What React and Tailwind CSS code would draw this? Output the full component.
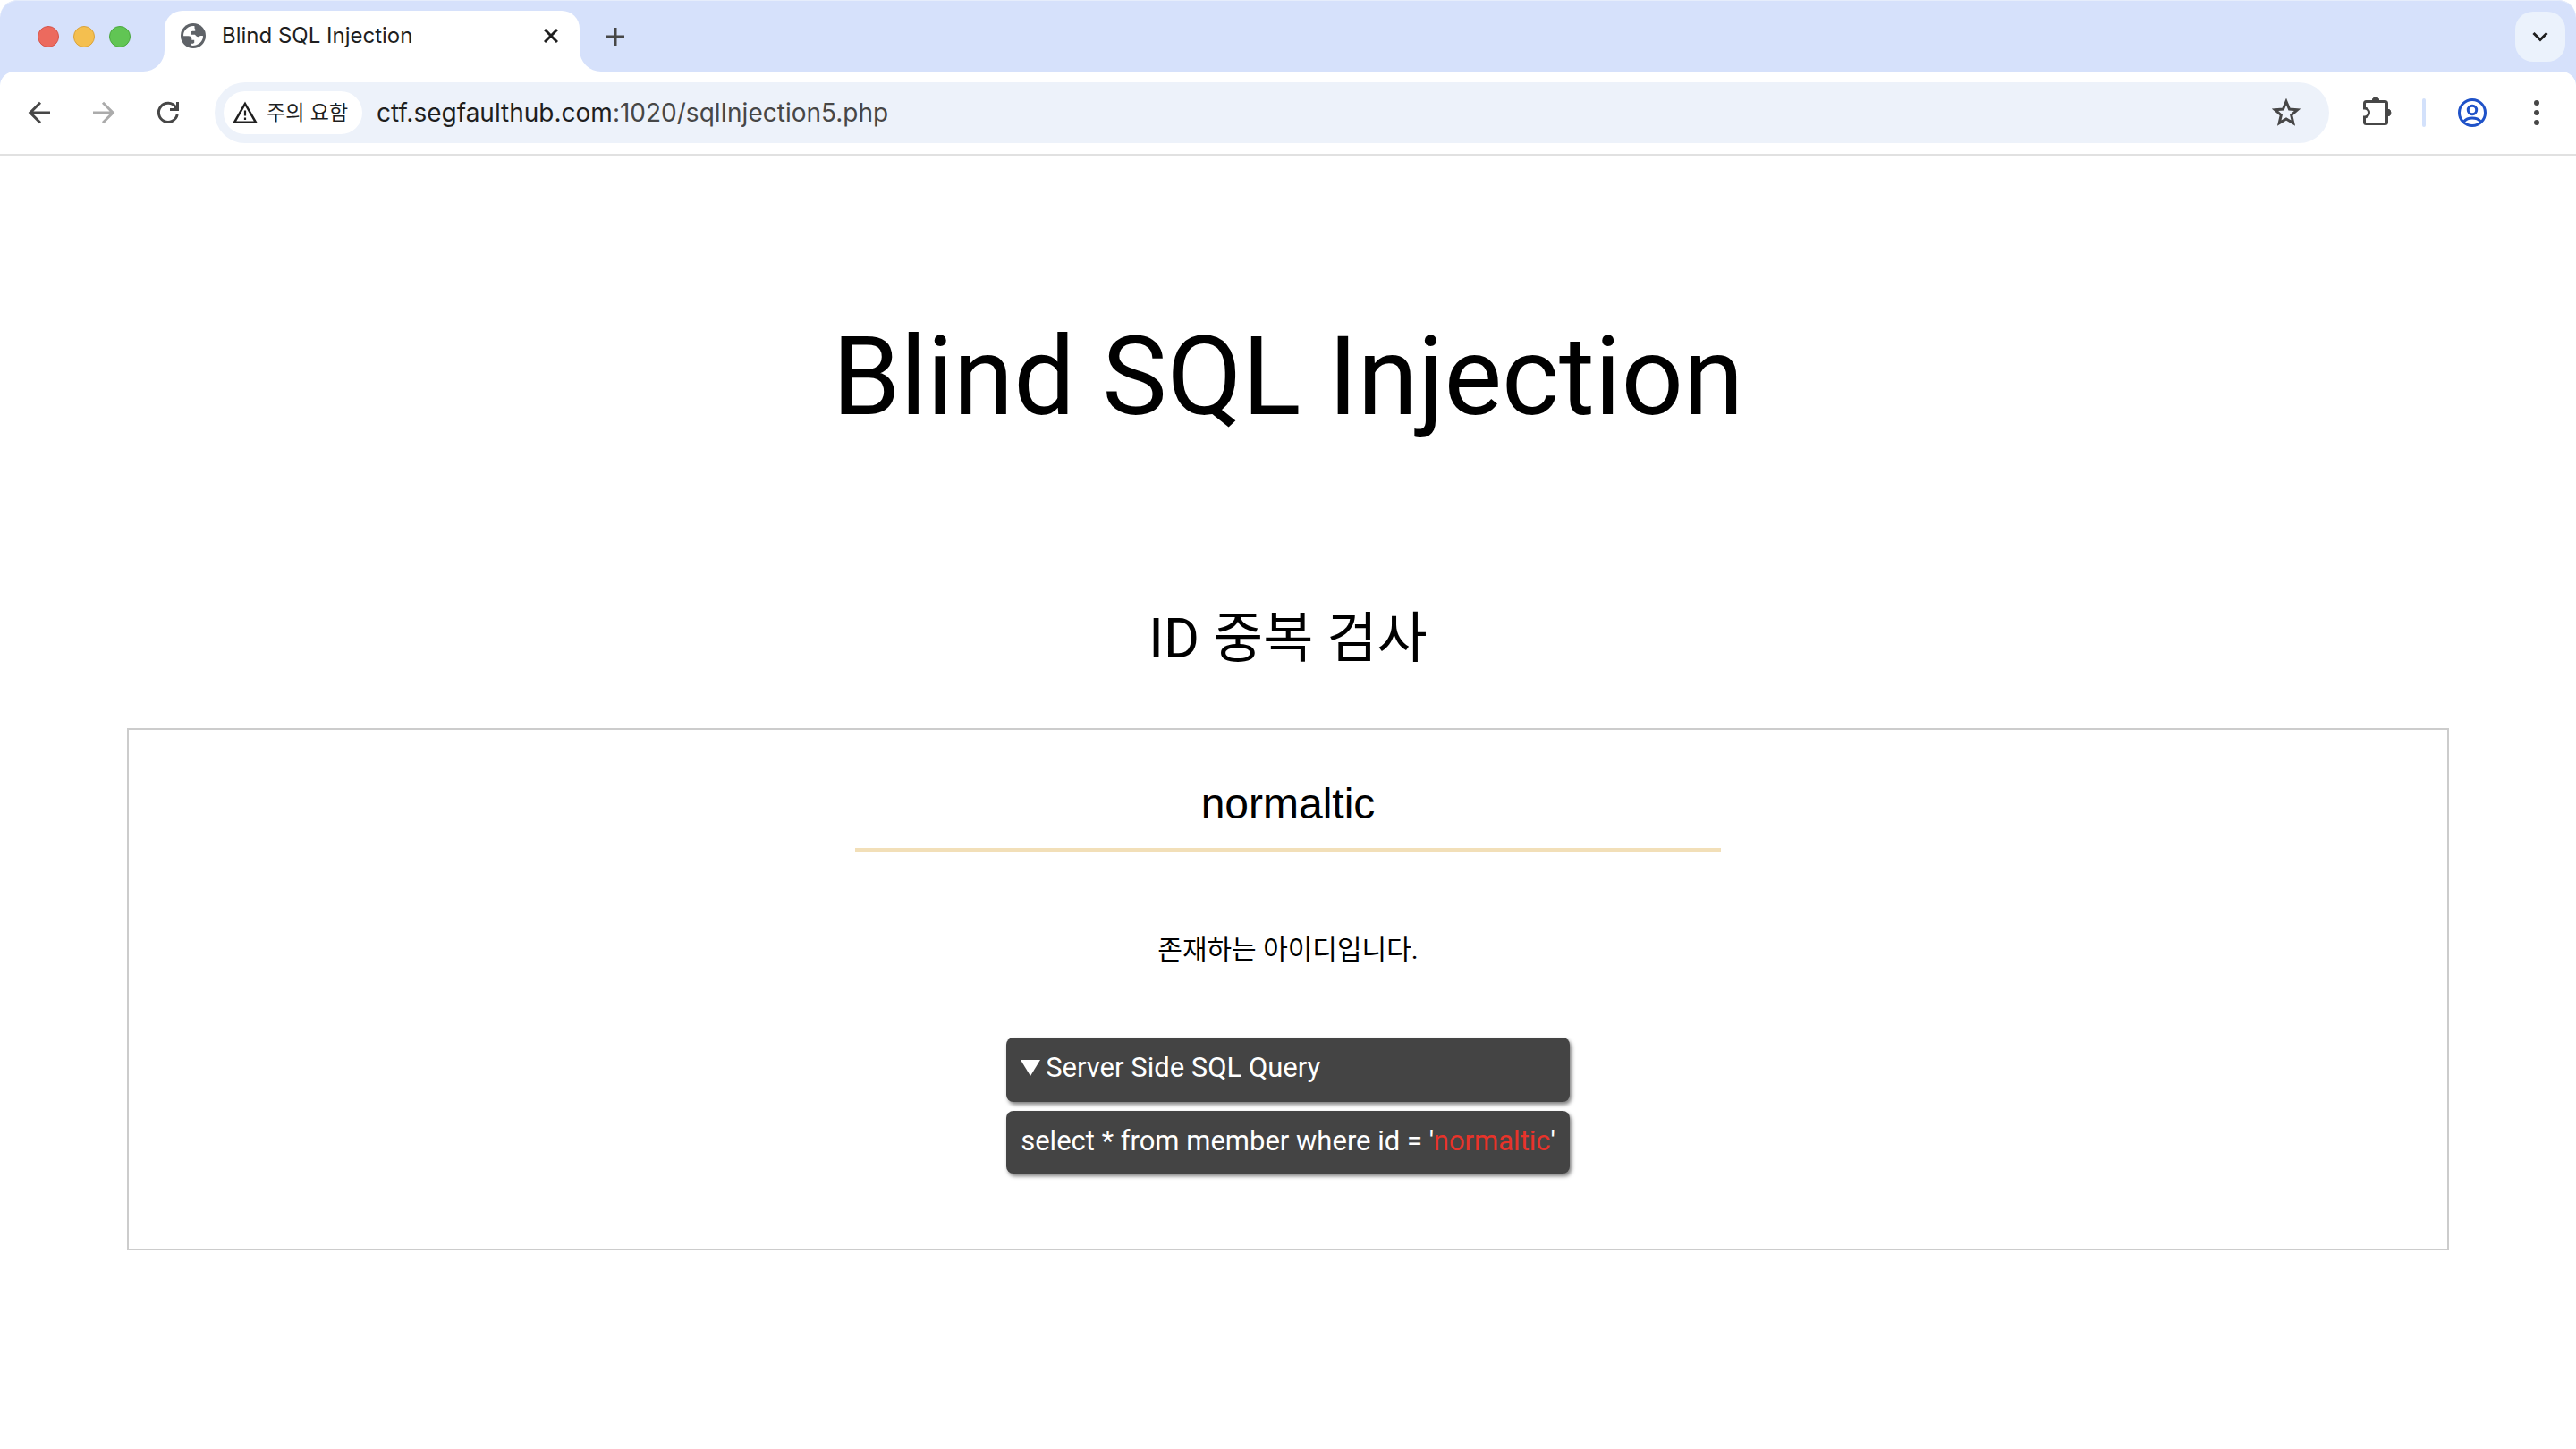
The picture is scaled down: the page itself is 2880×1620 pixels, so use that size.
import React from 'react';

const UI = 'font-["Inter","Noto_Sans_CJK_KR",sans-serif]';
const PAGE = 'font-["Roboto","Noto_Sans_CJK_KR",sans-serif]';

function TabFlare({ flip }) {
  return (
    <svg aria-hidden="true" viewBox="0 0 24 24" className="size-6 shrink-0 fill-white">
      <path d={flip ? 'M0 0A24 24 0 0 0 24 24H0Z' : 'M24 0A24 24 0 0 1 0 24H24Z'} />
    </svg>
  );
}

function Icon({ children, className, size = 'size-8', box = 32 }) {
  return (
    <svg
      aria-hidden="true"
      viewBox={`0 0 ${box} ${box}`}
      fill="none"
      stroke="currentColor"
      strokeWidth="3"
      className={`${size} shrink-0 ${className || ''}`}
    >
      {children}
    </svg>
  );
}

function IconButton({ label, className, children, disabled }) {
  return (
    <button
      type="button"
      aria-label={label}
      disabled={disabled}
      className={`flex size-14 shrink-0 items-center justify-center rounded-full ${className || 'text-[#474747]'}`}
    >
      {children}
    </button>
  );
}

function TabStrip() {
  return (
    <div className="flex h-20 items-end rounded-t-[20px] border-t border-[#e6edfb] pr-3">
      <div className="flex h-full items-center gap-4 pr-3.5 pl-10.5">
        <span className="size-6 rounded-full border border-[#d5544a] bg-[#ec6a5e]" />
        <span className="size-6 rounded-full border border-[#d9a23b] bg-[#f4bf4f]" />
        <span className="size-6 rounded-full border border-[#4ba73e] bg-[#61c554]" />
      </div>
      <TabFlare />
      <div className="flex h-17 w-116 items-center rounded-t-[20px] bg-white pr-4 pb-3 pl-4.5">
        <Icon size="size-7" box={28} className="text-[#5f6368]">
          <circle cx="14" cy="14" r="14" fill="currentColor" stroke="none" />
          <path
            d="M15.500 3.200C12 2.600 7 4.500 4.600 8.300C3.200 10.500 3 12 3.100 14.300H8.500C11 14.300 12.300 15.500 12.300 17V18.800H15.200V21.500C15.200 22.300 14.700 22.700 14 22.700H11.600V24.800C17 25.600 22.500 23 24.500 17.500C24.900 16.300 25 15 24.900 14H22.500C21.700 14 21.200 14.300 20.800 14.700C20 15.400 18.500 15.200 17.600 14.400L15.900 12.700H11.200V10.600C11.200 9.400 12 8.700 13.200 8.700H15.500C16.300 8.700 16.700 8.200 16.700 7.500C16.700 6.500 15.500 6.300 15.500 5.200Z"
            fill="white"
            stroke="none"
          />
        </Icon>
        <span className="ml-4.5 flex-1 text-2xl text-[#1f1f1f]">Blind SQL Injection</span>
        <button type="button" aria-label="탭 닫기" className="flex size-8 items-center justify-center text-[#1f1f1f]">
          <Icon size="size-4" box={16}>
            <path d="M1 1L15 15M15 1L1 15" />
          </Icon>
        </button>
      </div>
      <TabFlare flip />
      <div className="flex h-full flex-1 items-center justify-between">
        <button type="button" aria-label="새 탭" className="flex size-8 items-center justify-center text-[#474747]">
          <Icon size="size-5" box={20}>
            <path d="M10 0V20M0 10H20" />
          </Icon>
        </button>
        <button
          type="button"
          aria-label="탭 검색"
          className="flex size-14 items-center justify-center rounded-[20px] bg-[#ebf2fc] text-[#1f1f1f]"
        >
          <Icon size="size-5" box={20}>
            <path d="M2.500 6L10 13.500L17.500 6" />
          </Icon>
        </button>
      </div>
    </div>
  );
}

function Toolbar() {
  return (
    <div className="flex h-23.5 items-center rounded-t-2xl border-b-2 border-[#e1e1e1] bg-white px-4">
      <div className="flex gap-4">
        <IconButton label="뒤로">
          <Icon>
            <path d="M28 16H6M17 4.800L5.800 16L17 27.200" />
          </Icon>
        </IconButton>
        <IconButton label="앞으로" disabled className="text-[#ababab]">
          <Icon>
            <path d="M4 16H26M15 4.800L26.200 16L15 27.200" />
          </Icon>
        </IconButton>
        <IconButton label="새로고침">
          <Icon>
            <path d="M26.200 18A10.500 10.500 0 1 1 24.500 9.800" />
            <path d="M26.500 4V12.500H18" />
            <path d="M21 12H26V7Z" fill="currentColor" stroke="none" />
          </Icon>
        </IconButton>
      </div>
      <div className="mx-6 flex h-17 flex-1 items-center rounded-full bg-[#edf2fa] pr-5 pl-2.5">
        <button
          type="button"
          className="flex h-12 items-center gap-2.5 rounded-full bg-white pr-4 pl-2.5 text-[23px] text-[#1f1f1f]"
        >
          <Icon size="size-7" box={28}>
            <path d="M14 4L26 24.800H2Z" strokeWidth="2.500" />
            <path d="M14 11.500V17.500M14 19.500V22" strokeWidth="2.200" />
          </Icon>
          주의 요함
        </button>
        <div role="textbox" aria-label="주소창" tabIndex={0} className="flex-1 pl-4 text-[28px] text-[#474747]">
          <span className="text-[#1f1f1f]">ctf.segfaulthub.com</span>:1020/sqlInjection5.php
        </div>
        <IconButton label="북마크에 추가">
          <Icon>
            <path
              d="M16 3.500L19.500 12L28.600 12.700L21.700 18.700L23.800 27.600L16 22.900L8.200 27.600L10.300 18.700L3.400 12.700L12.500 12Z"
            />
          </Icon>
        </IconButton>
      </div>
      <IconButton label="확장 프로그램">
        <Icon className="overflow-visible">
          <path d="M3.500 11V5.500Q3.500 3.500 5.500 3.500H26.500Q28.500 3.500 28.500 5.500V26.500Q28.500 28.500 26.500 28.500H5.500Q3.500 28.500 3.500 26.500V21A5 5 0 0 0 3.500 11Z" />
          <path d="M12 3A4 4 0 0 1 20 3ZM29 12A4 4 0 0 1 29 20Z" fill="currentColor" strokeWidth="1" />
        </Icon>
      </IconButton>
      <span className="mx-6 h-8 w-1 rounded-full bg-[#d3e1fb]" />
      <IconButton label="프로필" className="text-[#1f52c8]">
        <Icon>
          <circle cx="16" cy="16" r="14.500" />
          <circle cx="16" cy="13" r="4.700" />
          <path d="M6.500 26C11 20.800 21 20.800 25.500 26" />
        </Icon>
      </IconButton>
      <IconButton label="메뉴" className="ml-4 text-[#474747]">
        <Icon>
          <g fill="currentColor" stroke="none">
            <circle cx="16" cy="5" r="3" />
            <circle cx="16" cy="16" r="3" />
            <circle cx="16" cy="27" r="3" />
          </g>
        </Icon>
      </IconButton>
    </div>
  );
}

const PANEL = 'rounded-lg bg-[#444444] px-4 pt-3 text-[31px] leading-11 text-white shadow-[2px_3px_4px_rgba(0,0,0,0.5)]';

export default function App() {
  return (
    <div className="min-h-screen bg-white">
      <header className={`rounded-t-[20px] bg-[#d6e1fb] ${UI}`}>
        <TabStrip />
        <Toolbar />
      </header>
      <main className={`flex flex-col items-center pt-42 text-black ${PAGE}`}>
        <h1 className="text-[122px] leading-40">Blind SQL Injection</h1>
        <h2 className="mt-42 text-[61px] leading-22">ID 중복 검사</h2>
        <section className="mt-14 flex w-9/10 box-content flex-col items-center border-2 border-[#cccccc] pt-11 pb-21">
          <input
            type="text"
            aria-label="ID"
            defaultValue="normaltic"
            className='h-23 w-242 border-b-4 border-[#f2dfb8] bg-transparent pb-3 text-center font-["Liberation_Sans",sans-serif] text-5xl outline-none'
          />
          <p className="mt-22 text-[30px] leading-11">존재하는 아이디입니다.</p>
          <details open className="mt-19">
            <summary className={`flex list-none items-center gap-1.5 pb-4 ${PANEL}`}>
              <svg aria-hidden="true" viewBox="0 0 22 18" className="h-4.5 w-5.5 fill-white">
                <path d="M0 0H22L11 18Z" />
              </svg>
              Server Side SQL Query
            </summary>
            <p className={`mt-2.5 pb-3.5 ${PANEL}`}>
              select * from member where id = '<span className="text-[#e8332a]">normaltic</span>'
            </p>
          </details>
        </section>
      </main>
    </div>
  );
}
